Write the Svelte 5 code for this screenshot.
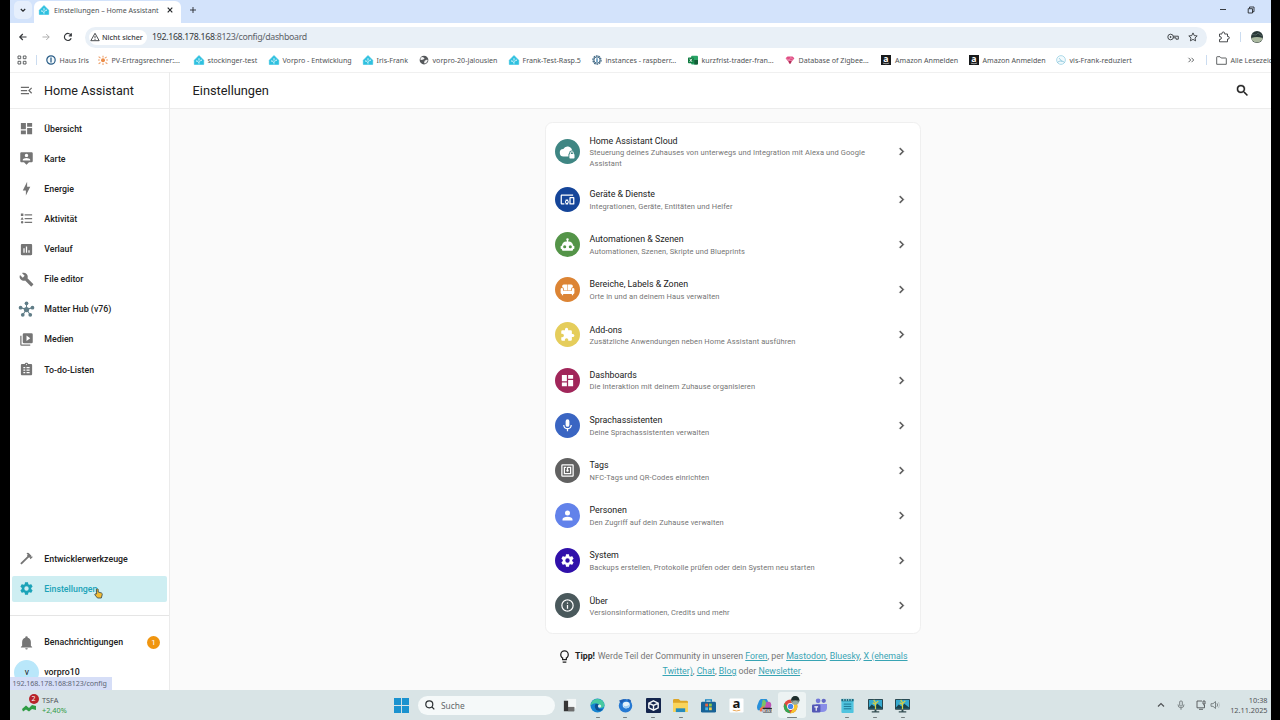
<script>
  const icons = {
    menu: 'M21,15.61L19.59,17L14.58,12L19.59,7L21,8.39L17.44,12L21,15.61M3,6H16V8H3V6M3,13V11H13V13H3M3,18V16H16V18H3Z',
    search: 'M9.5,3A6.5,6.5 0 0,1 16,9.5C16,11.11 15.41,12.59 14.44,13.73L14.71,14H15.5L20.5,19L19,20.5L14,15.5V14.71L13.73,14.44C12.59,15.41 11.11,16 9.5,16A6.5,6.5 0 0,1 3,9.5A6.5,6.5 0 0,1 9.5,3M9.5,5C7,5 5,7 5,9.5C5,12 7,14 9.5,14C12,14 14,12 14,9.5C14,7 12,5 9.5,5Z',
    dashboard: 'M13,3V9H21V3M13,21H21V11H13M3,21H11V15H3M3,13H11V3H3V13Z',
    map: 'M20 2H4C2.89 2 2 2.89 2 4V16C2 17.11 2.9 18 4 18H8L12 22L16 18H20C21.11 18 22 17.11 22 16V4C22 2.89 21.1 2 20 2M12 4.3C13.5 4.3 14.7 5.5 14.7 7S13.5 9.7 12 9.7 9.3 8.5 9.3 7 10.5 4.3 12 4.3M18 15H6V14.1C6 12.1 10 11 12 11S18 12.1 18 14.1V15Z',
    bolt: 'M11 15H6L13 1V9H18L11 23V15Z',
    list: 'M5,9.5L7.5,14H2.5L5,9.5M3,4H7V8H3V4M5,20A2,2 0 0,0 7,18A2,2 0 0,0 5,16A2,2 0 0,0 3,18A2,2 0 0,0 5,20M9,5V7H21V5H9M9,19H21V17H9V19M9,11V13H21V11H9Z',
    chart: 'M19 3H5C3.89 3 3 3.89 3 5V19C3 20.1 3.9 21 5 21H19C20.1 21 21 20.1 21 19V5C21 3.89 20.1 3 19 3M9 17H7V10H9V17M13 17H11V7H13V17M17 17H15V13H17V17Z',
    wrench: 'M22.7,19L13.6,9.9C14.5,7.6 14,4.9 12.1,3C10.1,1 7.1,0.6 4.7,1.7L9,6L6,9L1.6,4.7C0.4,7.1 0.9,10.1 2.9,12.1C4.8,14 7.5,14.5 9.8,13.6L18.9,22.7C19.3,23.1 19.9,23.1 20.3,22.7L22.6,20.4C23.1,20 23.1,19.3 22.7,19Z',
    media: 'M4,6H2V20A2,2 0 0,0 4,22H18V20H4V6M20,2H8A2,2 0 0,0 6,4V16A2,2 0 0,0 8,18H20A2,2 0 0,0 22,16V4A2,2 0 0,0 20,2M12,14.5V5.5L18,10L12,14.5Z',
    todo: 'M19 3H14.82C14.4 1.84 13.3 1 12 1S9.6 1.84 9.18 3H5C3.9 3 3 3.9 3 5V19C3 20.1 3.9 21 5 21H19C20.1 21 21 20.1 21 19V5C21 3.9 20.1 3 19 3M12 3A1 1 0 1 1 12 5A1 1 0 1 1 12 3M7 8H10V10H7V8M12 8H17V10H12V8M7 12H10V14H7V12M12 12H17V14H12V12M7 16H10V18H7V16M12 16H17V18H12V16Z',
    hammer: 'M2,19.63L13.43,8.2L12.72,7.5L14.14,6.07L12,3.89C13.2,2.7 15.09,2.7 16.27,3.89L19.87,7.5L18.45,8.91H21.29L22,9.62L18.45,13.21L17.74,12.5V9.62L16.27,11.04L15.56,10.33L4.13,21.76L2,19.63Z',
    cog: 'M12,15.5A3.5,3.5 0 0,1 8.5,12A3.5,3.5 0 0,1 12,8.5A3.5,3.5 0 0,1 15.5,12A3.5,3.5 0 0,1 12,15.5M19.43,12.97C19.47,12.65 19.5,12.33 19.5,12C19.5,11.67 19.47,11.34 19.43,11L21.54,9.37C21.73,9.22 21.78,8.95 21.66,8.73L19.66,5.27C19.54,5.05 19.27,4.96 19.05,5.05L16.56,6.05C16.04,5.66 15.5,5.32 14.87,5.07L14.5,2.42C14.46,2.18 14.25,2 14,2H10C9.75,2 9.54,2.18 9.5,2.42L9.13,5.07C8.5,5.32 7.96,5.66 7.44,6.05L4.95,5.05C4.73,4.96 4.46,5.05 4.34,5.27L2.34,8.73C2.21,8.95 2.27,9.22 2.46,9.37L4.57,11C4.53,11.34 4.5,11.67 4.5,12C4.5,12.33 4.53,12.65 4.57,12.97L2.46,14.63C2.27,14.78 2.21,15.05 2.34,15.27L4.34,18.73C4.46,18.95 4.73,19.03 4.95,18.95L7.44,17.94C7.96,18.34 8.5,18.68 9.13,18.93L9.5,21.58C9.54,21.82 9.75,22 10,22H14C14.25,22 14.46,21.82 14.5,21.58L14.87,18.93C15.5,18.67 16.04,18.34 16.56,17.94L19.05,18.95C19.27,19.03 19.54,18.95 19.66,18.73L21.66,15.27C21.78,15.05 21.73,14.78 21.54,14.63L19.43,12.97Z',
    bell: 'M21,19V20H3V19L5,17V11C5,7.9 7.03,5.17 10,4.29C10,4.19 10,4.1 10,4A2,2 0 0,1 12,2A2,2 0 0,1 14,4C14,4.1 14,4.19 14,4.29C16.97,5.17 19,7.9 19,11V17L21,19M14,21A2,2 0 0,1 12,23A2,2 0 0,1 10,21',
    cloud: 'M19.3 10A7.5 7.5 0 0 0 5.3 8A6 6 0 0 0 6 20H13.5V16.5Q13.5 15.3 14.7 15V14.5A4.2 4.2 0 0 1 22.5 12.5A5 5 0 0 0 19.3 10M22 16V14.5A2.9 2.9 0 0 0 16.2 14.5V16Q15 16 15 17.2V21.8Q15 23 16.2 23H22Q23.2 23 23.2 21.8V17.2Q23.2 16 22 16M17.6 16V14.5A1.5 1.5 0 0 1 20.6 14.5V16H17.6Z',
    devices: 'M3 6H21V4H3C1.9 4 1 4.9 1 6V18C1 19.1 1.9 20 3 20H7V18H3V6M13 12H9V13.78C8.39 14.33 8 15.11 8 16C8 16.89 8.39 17.67 9 18.22V20H13V18.22C13.61 17.67 14 16.88 14 16S13.61 14.33 13 13.78V12M11 17.5C10.17 17.5 9.5 16.83 9.5 16S10.17 14.5 11 14.5 12.5 15.17 12.5 16 11.83 17.5 11 17.5M22 8H16C15.5 8 15 8.5 15 9V19C15 19.5 15.5 20 16 20H22C22.5 20 23 19.5 23 19V9C23 8.5 22.5 8 22 8M21 18H17V10H21V18Z',
    robot: 'M12,2A2,2 0 0,1 14,4C14,4.74 13.6,5.39 13,5.73V7H14A7,7 0 0,1 21,14H22A1,1 0 0,1 23,15V18A1,1 0 0,1 22,19H21V20A2,2 0 0,1 19,22H5A2,2 0 0,1 3,20V19H2A1,1 0 0,1 1,18V15A1,1 0 0,1 2,14H3A7,7 0 0,1 10,7H11V5.73C10.4,5.39 10,4.74 10,4A2,2 0 0,1 12,2M7.5,13A2.5,2.5 0 0,0 5,15.5A2.5,2.5 0 0,0 7.5,18A2.5,2.5 0 0,0 10,15.5A2.5,2.5 0 0,0 7.5,13M16.5,13A2.5,2.5 0 0,0 14,15.5A2.5,2.5 0 0,0 16.5,18A2.5,2.5 0 0,0 19,15.5A2.5,2.5 0 0,0 16.5,13Z',
    sofa: 'M11.6 4V13H6.2V11.5A3.2 3.2 0 0 0 3.5 8.5V6.5Q3.5 4 6 4ZM12.4 4H18Q20.5 4 20.5 6.5V8.5A3.2 3.2 0 0 0 17.8 11.5V13H12.4ZM3 9.5A2 2 0 0 1 5 11.5V14H19V11.5A2 2 0 0 1 23 11.5V17Q23 19 21 19V21H19V19H5V21H3V19Q1 19 1 17V11.5A2 2 0 0 1 3 9.5Z',
    puzzle: 'M20.5,11H19V7C19,5.89 18.1,5 17,5H13V3.5A2.5,2.5 0 0,0 10.5,1A2.5,2.5 0 0,0 8,3.5V5H4A2,2 0 0,0 2,7V10.8H3.5C5,10.8 6.2,12 6.2,13.5C6.2,15 5,16.2 3.5,16.2H2V20A2,2 0 0,0 4,22H7.8V20.5C7.8,19 9,17.8 10.5,17.8C12,17.8 13.2,19 13.2,20.5V22H17A2,2 0 0,0 19,20V16H20.5A2.5,2.5 0 0,0 23,13.5A2.5,2.5 0 0,0 20.5,11Z',
    mic: 'M12,2A3,3 0 0,1 15,5V11A3,3 0 0,1 12,14A3,3 0 0,1 9,11V5A3,3 0 0,1 12,2M19,11C19,14.53 16.39,17.44 13,17.93V21H11V17.93C7.61,17.44 5,14.53 5,11H7A5,5 0 0,0 12,16A5,5 0 0,0 17,11H19Z',
    nfc: 'M18,6H13A2,2 0 0,0 11,8V10.28C10.41,10.62 10,11.26 10,12A2,2 0 0,0 12,14C13.11,14 14,13.1 14,12C14,11.26 13.6,10.62 13,10.28V8H16V16H8V8H10V6H8L6,6V18H18M20,20H4V4H20M20,2H4A2,2 0 0,0 2,4V20A2,2 0 0,0 4,22H20C21.11,22 22,21.1 22,20V4C22,2.89 21.11,2 20,2Z',
    account: 'M12,4A4,4 0 0,1 16,8A4,4 0 0,1 12,12A4,4 0 0,1 8,8A4,4 0 0,1 12,4M12,14C16.42,14 20,15.79 20,18V20H4V18C4,15.79 7.58,14 12,14Z',
    info: 'M11,9H13V7H11M12,20C7.59,20 4,16.41 4,12C4,7.59 7.59,4 12,4C16.41,4 20,7.59 20,12C20,16.41 16.41,20 12,20M12,2A10,10 0 0,0 2,12A10,10 0 0,0 12,22A10,10 0 0,0 22,12A10,10 0 0,0 12,2M11,17H13V11H11V17Z',
    chevron: 'M8.59,16.58L13.17,12L8.59,7.41L10,6L16,12L10,18L8.59,16.58Z',
    bulb: 'M12,2A7,7 0 0,1 19,9C19,11.38 17.81,13.47 16,14.74V17A1,1 0 0,1 15,18H9A1,1 0 0,1 8,17V14.74C6.19,13.47 5,11.38 5,9A7,7 0 0,1 12,2M9,21V20H15V21A1,1 0 0,1 14,22H10A1,1 0 0,1 9,21M12,4A5,5 0 0,0 7,9C7,11.05 8.23,12.81 10,13.58V16H14V13.58C15.77,12.81 17,11.05 17,9A5,5 0 0,0 12,4Z',
  };

  const bookmarks = [
    { icon: 'power', label: 'Haus Iris' },
    { icon: 'sun', label: 'PV-Ertragsrechner:...' },
    { icon: 'ha', label: 'stockinger-test' },
    { icon: 'ha', label: 'Vorpro - Entwicklung' },
    { icon: 'ha', label: 'Iris-Frank' },
    { icon: 'globe', label: 'vorpro-20-Jalousien' },
    { icon: 'ha', label: 'Frank-Test-Rasp.5' },
    { icon: 'iobroker', label: 'instances - raspberr...' },
    { icon: 'excel', label: 'kurzfrist-trader-fran...' },
    { icon: 'zigbee', label: 'Database of Zigbee...' },
    { icon: 'amazon', label: 'Amazon Anmelden' },
    { icon: 'amazon', label: 'Amazon Anmelden' },
    { icon: 'vis', label: 'vis-Frank-reduziert' },
  ];

  const navItems = [
    { icon: 'dashboard', label: 'Übersicht' },
    { icon: 'map', label: 'Karte' },
    { icon: 'bolt', label: 'Energie' },
    { icon: 'list', label: 'Aktivität' },
    { icon: 'chart', label: 'Verlauf' },
    { icon: 'wrench', label: 'File editor' },
    { icon: 'hub', label: 'Matter Hub (v76)' },
    { icon: 'media', label: 'Medien' },
    { icon: 'todo', label: 'To-do-Listen' },
  ];

  const settings = [
    { icon: 'cloud', color: '#3f8683', title: 'Home Assistant Cloud', text: 'Steuerung deines Zuhauses von unterwegs und Integration mit Alexa und Google Assistant' },
    { icon: 'devices', color: '#154599', title: 'Geräte & Dienste', text: 'Integrationen, Geräte, Entitäten und Helfer' },
    { icon: 'robot', color: '#549448', title: 'Automationen & Szenen', text: 'Automationen, Szenen, Skripte und Blueprints' },
    { icon: 'sofa', color: '#dc8434', title: 'Bereiche, Labels & Zonen', text: 'Orte in und an deinem Haus verwalten' },
    { icon: 'puzzle', color: '#e5cd5b', title: 'Add-ons', text: 'Zusätzliche Anwendungen neben Home Assistant ausführen' },
    { icon: 'dashboard', color: '#a1265a', title: 'Dashboards', text: 'Die Interaktion mit deinem Zuhause organisieren' },
    { icon: 'mic', color: '#3a65c2', title: 'Sprachassistenten', text: 'Deine Sprachassistenten verwalten' },
    { icon: 'nfc', color: '#616161', title: 'Tags', text: 'NFC-Tags und QR-Codes einrichten' },
    { icon: 'account', color: '#6282ea', title: 'Personen', text: 'Den Zugriff auf dein Zuhause verwalten' },
    { icon: 'cog', color: '#3010aa', title: 'System', text: 'Backups erstellen, Protokolle prüfen oder dein System neu starten' },
    { icon: 'info', color: '#4a595c', title: 'Über', text: 'Versionsinformationen, Credits und mehr' },
  ];

  const apps = ['taskview', 'edge', 'thunderbird', 'cube', 'explorer', 'store', 'amazon', 'copilot', 'chrome', 'teams', 'notepad', 'remote', 'remote'];
  const running = ['edge', 'thunderbird', 'cube', 'explorer', 'notepad', 'remote'];
</script>

{#snippet mdi(name)}
  <svg class="mdi" viewBox="0 0 24 24">
    {#if name === 'hub'}
      <path d="M12 12V2M12 12 2.500 9M12 12 21.500 9M12 12 6 20.500M12 12 18 20.500" stroke="currentColor" stroke-width="1.700" />
      <circle cx="12" cy="12" r="4.200" /><circle cx="12" cy="2" r="3" /><circle cx="2.500" cy="9" r="3" />
      <circle cx="21.500" cy="9" r="3" /><circle cx="6" cy="20.500" r="3" /><circle cx="18" cy="20.500" r="3" />
    {:else}
      <path fill-rule="evenodd" d={icons[name]} />
    {/if}
  </svg>
{/snippet}

{#snippet favicon(name)}
  <svg class="favicon" viewBox="0 0 16 16">
    {#if name === 'ha'}
      <path d="M8 .8 15.500 8.300V15H.5V8.300Z" fill="#2fc0df" stroke="#2fc0df" stroke-linejoin="round" />
      <path d="M8 15V7M8 12.800 4.800 9.600M8 11.500 11.200 8.500" stroke="#d5f5fb" stroke-width="1" />
      <circle cx="8" cy="6.500" r="1.200" fill="#d5f5fb" /><circle cx="4.500" cy="9.500" r="1.200" fill="#d5f5fb" /><circle cx="11.500" cy="8.500" r="1.200" fill="#d5f5fb" />
    {:else if name === 'power'}
      <circle cx="8" cy="8" r="6.700" fill="#f4fafc" stroke="#285b86" stroke-width="1.900" />
      <path d="M8 4v8" stroke="#285b86" stroke-width="2" />
    {:else if name === 'sun'}
      <circle cx="8" cy="8.500" r="3.200" fill="#ec8d49" />
      <path d="M0 8h3M1 2.500l3 2.500M1 14l3-2M8 1v3M8 13v3M14 3l-3 2M13 8h3M12 12l3 2" stroke="#eda16c" stroke-width="1.800" />
    {:else if name === 'globe'}
      <circle cx="8" cy="8" r="7" fill="#55585b" />
      <path d="M3 4 6 3 9 5 7 7 4 8 2 7M9 9 13 7 14 9 11 13 8 13Z" fill="#f3f3f3" />
    {:else if name === 'iobroker'}
      <circle cx="8" cy="8" r="6.500" fill="none" stroke="#416884" stroke-width="2" stroke-dasharray="2.800 1.200" />
      <circle cx="8" cy="8" r="5" fill="#fff" stroke="#416884" stroke-width="1.600" /><path d="M8 5v6" stroke="#3279aa" stroke-width="2" />
    {:else if name === 'excel'}
      <rect x="5" y="1" width="11" height="14" rx="1.500" fill="#29a366" /><path d="M10 8h6v5.500q0 1.500-1.500 1.500H10Z" fill="#135e36" />
      <rect y="4" width="9" height="9" rx="1" fill="#107c41" /><path d="m2.600 6 3.800 5m0-5-3.800 5" stroke="#fff" stroke-width="1.300" />
    {:else if name === 'zigbee'}
      <path d="M1 5 4 2.500H12L15 5 12 9H4Z" fill="#df4c83" /><path d="M5 9.500H11L9 14H7Z" fill="#b62c59" /><path d="m2 6 5 2 2-4 4 3" stroke="#f3a4bd" fill="none" />
    {:else if name === 'amazon'}
      <rect x="0" y="0" width="16" height="16" fill="#17191a" />
      <text x="8" y="11.300" text-anchor="middle" class="brand-a">a</text>
      <path d="M3 13q5 2 10 0" stroke="#eee" fill="none" />
    {:else}
      <circle cx="8" cy="8" r="7" fill="#f2fafd" stroke="#a9d8e8" stroke-width="1.500" /><path d="m5 5 5 6M2 12q6-5 12 0" stroke="#86c4da" stroke-width="1.300" fill="none" />
    {/if}
  </svg>
{/snippet}

{#snippet appIcon(name)}
  <svg class="app-icon" viewBox="0 0 16 16">
    {#if name === 'taskview'}
      <path d="M5 1H15V11H5Z" fill="#f2f6f6" /><path d="M2 3H6.500V9.500H13V14H2Z" fill="#353535" /><path d="M6.500 9.500H13V14H6.500Z" fill="#6d6d6d" />
    {:else if name === 'edge'}
      <circle cx="8" cy="8" r="7.500" fill="#1684d0" />
      <path d="M1 6A7.500 7.500 0 0 1 15.500 8Q15 11 11 10.500 9 10 10 8 9 5.500 6 5.500 3 5.500.6 8Z" fill="#46c9a1" />
      <path d="M10 8Q8.500 5.500 6 6.500 4 9 6.500 12.500 10 15 14 12 11 13 9 11 8 9.500 10 8" fill="#0d4f91" /><circle cx="10.200" cy="8.600" r="1.800" fill="#e2efef" />
    {:else if name === 'thunderbird'}
      <circle cx="8" cy="8.300" r="7.200" fill="#2579d3" />
      <path d="M1 3Q5 0 9 2 5 3 4 6ZM10 1Q14 1 14 4L11 4Z" fill="#1e5db1" /><ellipse cx="8.800" cy="7.500" rx="3.800" ry="3.400" fill="#e4f2fb" /><path d="M5 6Q7 11 12.500 7 11 12 7 11Z" fill="#9fcdf3" />
    {:else if name === 'cube'}
      <rect width="16" height="16" rx="1" fill="#14254d" />
      <path d="m8 3 5 2.500v5L8 13l-5-2.500v-5ZM3 5.500l5 2.500 5-2.500M8 8v5" fill="none" stroke="#f1f5f8" stroke-width="1.500" />
    {:else if name === 'explorer'}
      <path d="M0 2.500Q0 1 1.500 1H6L8 3H14.500Q16 3 16 4.500V14H0Z" fill="#dda526" /><path d="M0 5H16V14Q16 15 15 15H1Q0 15 0 14Z" fill="#f9d45b" /><path d="M3 11H13V15H3Z" fill="#258bbb" />
    {:else if name === 'store'}
      <path d="M5 4V2H11V4" stroke="#1885c2" stroke-width="1.500" fill="none" /><rect y="4" width="16" height="11.500" rx="1.500" fill="#176297" />
      <path d="M4.500 6H7.500V9H4.500Z" fill="#e9663e" /><path d="M8.500 6H11.500V9H8.500Z" fill="#8dca49" /><path d="M4.500 10H7.500V13H4.500Z" fill="#44b9ec" /><path d="M8.500 10H11.500V13H8.500Z" fill="#f2cb44" />
    {:else if name === 'amazon'}
      <rect x=".5" y=".5" width="15" height="15" rx="1" fill="#fff" /><text x="8" y="11" text-anchor="middle" class="brand-a dark">a</text><path d="M4 13q4 1.500 8 0" stroke="#eca653" fill="none" />
    {:else if name === 'copilot'}
      <path d="M4 1H10Q11 1 12 5L10 8H6L4 13H1Q-1 10 1 6Q2 2 4 1" fill="#2790db" /><path d="M6 2Q9 1 10 6L8 12 4 13Z" fill="#7bc368" /><path d="M10 4H13Q16 5 15 9L12 14H5L8 11Z" fill="#bb55b5" /><path d="M3 11 8 8 7 13Q5 15 3 14Z" fill="#ed774b" />
      <rect x="6" y="10.500" width="10" height="5" rx="1" fill="#26252d" /><text x="11" y="14.500" text-anchor="middle" class="m365">M365</text>
    {:else if name === 'chrome'}
      <circle cx="7" cy="9" r="7.300" fill="#e04a3f" /><path d="M.7 5.500 5 12.500 7 16.300A7.300 7.300 0 0 1 .7 5.500" fill="#34a853" /><path d="M7 5.500H13.300A7.300 7.300 0 0 1 6.500 16.300L10.200 11Z" fill="#f7c72d" />
      <circle cx="7" cy="9" r="3.700" fill="#fff" /><circle cx="7" cy="9" r="2.800" fill="#4386ed" /><circle cx="12" cy="2.500" r="4.600" fill="#97aaa0" /><path d="M7.400 3Q8-2.100 12-2.100T16.600 3Q12 1.500 7.400 3" fill="#1f2e2c" /><path d="M8 4.500Q12 1.500 16 4.500L15 2.500H9Z" fill="#4e5552" />
    {:else if name === 'teams'}
      <circle cx="6.500" cy="3" r="2.500" fill="#7378d8" /><circle cx="12.500" cy="3" r="2.300" fill="#6267c4" /><path d="M4 6.500H16V11Q15.500 15 11 15H8Q4 14 4 10Z" fill="#898ee8" />
      <rect y="7" width="9" height="8.500" rx="1.200" fill="#5257b5" /><path d="M2.500 9.500H6.500M4.500 9.500V13.500" stroke="#fff" stroke-width="1.200" />
    {:else if name === 'notepad'}
      <rect x="1.500" y="1" width="13" height="15" rx="1" fill="#50c4df" /><path d="M1.500 1H14.500V3.500H1.500Z" fill="#17697f" /><path d="M4 6.500H12M4 9H12M4 11.500H12" stroke="#19728f" /><path d="M4 0v3M6.700 0v3M9.300 0v3M12 0v3" stroke="#b3dce3" />
    {:else}
      <rect y="1" width="16" height="11.500" rx=".8" fill="#283f46" /><rect x="1" y="2" width="14" height="9.500" fill="#36a9cf" /><path d="M1 10 4 7 7 9 10 6 15 10V11.500H1Z" fill="#19414c" />
      <path d="M8 12V5M8 7 5 5M8 6 11 3M6 2 8 5" stroke="#d8cf43" stroke-width="1.300" /><path d="M7 12.500H9V14H12V15.500H4V14H7Z" fill="#344d52" />
    {/if}
  </svg>
{/snippet}

<div class="screen">
  <div class="tabs">
    <div class="tab-search">
      <svg class="i8" viewBox="0 0 8 8"><path d="M1.800 3 4 5.200 6.200 3" class="line bold" /></svg>
    </div>
    <div class="tab">
      {@render favicon('ha')}
      <span class="tab-title">Einstellungen – Home Assistant</span>
      <svg class="i8" viewBox="0 0 8 8"><path d="m1.700 1.700 4.600 4.600m0-4.600L1.700 6.300" class="line bold" /></svg>
    </div>
    <svg class="i8 new-tab" viewBox="0 0 8 8"><path d="M4 1v6M1 4h6" class="line" /></svg>
    <div class="window-buttons">
      <svg class="i8" viewBox="0 0 8 8"><path d="M1 3.500h6" class="line" /></svg>
      <svg class="i8" viewBox="0 0 8 8"><path d="M1.200 2.700h4.300v4.300H1.200ZM2.500 2.500V1h4.500v4.700H5.500" class="line" /></svg>
    </div>
  </div>

  <div class="toolbar">
    <div class="nav-buttons">
      <svg class="i10" viewBox="0 0 10 10"><path d="M8.500 5H1.800M4.800 2 1.800 5l3 3" class="line bold" /></svg>
      <svg class="i10 muted" viewBox="0 0 10 10"><path d="M1.500 5h6.700M5.200 2l3 3-3 3" class="line" /></svg>
      <svg class="i10" viewBox="0 0 10 10"><path d="M8.200 6.200A3.500 3.500 0 1 1 8 3.300M8.300 1.300v2.500H5.800" class="line bold" /></svg>
    </div>
    <div class="omnibox">
      <div class="insecure">
        <svg class="i10" viewBox="0 0 10 10"><path d="M5 1.300 9.200 8.700H.8ZM5 4v2.300M5 7v.9" class="line" /></svg>
        <span>Nicht sicher</span>
      </div>
      <span class="url">192.168.178.168<i>:8123/config/dashboard</i></span>
      <svg class="key" viewBox="0 0 12 8"><circle cx="3.600" cy="4" r="2.800" class="line" /><circle cx="3.600" cy="4" r=".8" /><path d="M6.300 3.200h5v3H9V4.800H6.300" class="line" /></svg>
      <svg class="i10" viewBox="0 0 10 10"><path d="m5 .9 1.250 2.700 2.950.35-2.200 2 .6 2.900L5 7.400 2.400 8.850 3 5.950.8 3.950l2.950-.35Z" class="line" /></svg>
    </div>
    <svg class="ext" viewBox="0 0 12 12"><path d="M1.500 3H4V2.300a1.300 1.300 0 0 1 2.600 0V3H9.500V5.500H10a1.300 1.300 0 0 1 0 2.600h-.5V10.800H1.500V8.400H2a1.400 1.400 0 0 0 0-2.800h-.5Z" class="line" /></svg>
    <span class="sep"></span>
    <svg class="avatar" viewBox="0 0 12 12"><circle cx="6" cy="6" r="6" fill="#293736" /><path d="M.2 7Q6 5 11.800 7A6 6 0 0 1 .2 7" fill="#aab89f" /><path d="M1 3.500 5 4 7 2 11 5" stroke="#5e7070" stroke-width=".7" fill="none" /></svg>
  </div>

  <div class="bookmarks">
    <svg class="i10 apps-grid" viewBox="0 0 10 10"><path d="M1 1h2.700v2.700H1ZM6.300 1H9v2.700H6.300ZM1 6.300h2.700V9H1ZM6.300 6.300H9V9H6.300Z" class="line" /></svg>
    <span class="sep"></span>
    <div class="bookmark-list">
      {#each bookmarks as b}
        <div class="bookmark">{@render favicon(b.icon)}<span>{b.label}</span></div>
      {/each}
    </div>
    <svg class="i8 more" viewBox="0 0 8 8"><path d="m1.500 1.800 2.200 2.200-2.200 2.200M4.500 1.800 6.700 4 4.500 6.200" class="line" /></svg>
    <span class="sep"></span>
    <svg class="folder" viewBox="0 0 11 9"><path d="M.7 1.200Q.7.700 1.200.7H4L5.200 2H9.800Q10.300 2 10.300 2.500V8.300H.7Z" class="line" /></svg>
    <span class="all">Alle Lesezeichen</span>
  </div>

  <div class="page">
    <aside>
      <div class="brand">{@render mdi('menu')}<span>Home Assistant</span></div>
      <nav>
        {#each navItems as item}
          <div class="nav-item" class:hub={item.icon === 'hub'}>{@render mdi(item.icon)}<span>{item.label}</span></div>
        {/each}
      </nav>
      <div class="nav-bottom">
        <div class="nav-item">{@render mdi('hammer')}<span>Entwicklerwerkzeuge</span></div>
        <div class="nav-item active">
          {@render mdi('cog')}<span>Einstellungen</span>
          <svg class="pointer" viewBox="0 0 9 11"><path d="M2.600 6V1.300Q3.400.4 4.200 1.300V4L7.500 5Q8.500 5.300 8.200 6.800L7.300 10H3.500L.8 6.800Q.8 5.700 1.700 5.800Z" fill="#f3bd34" stroke="#32434a" stroke-width=".8" /></svg>
        </div>
      </div>
      <div class="nav-user">
        <div class="nav-item">{@render mdi('bell')}<span>Benachrichtigungen</span><b class="count">1</b></div>
        <div class="nav-item user"><span class="initial">v</span><span>vorpro10</span></div>
      </div>
      <div class="status">192.168.178.168:8123/config</div>
    </aside>

    <main>
      <header><h1>Einstellungen</h1>{@render mdi('search')}</header>
      <div class="card">
        {#each settings as s}
          <div class="row">
            <div class="round" style:background={s.color}>{@render mdi(s.icon)}</div>
            <div class="row-text"><h2>{s.title}</h2><p>{s.text}</p></div>
            {@render mdi('chevron')}
          </div>
        {/each}
      </div>
      <div class="tip">
        {@render mdi('bulb')}<b>Tipp!</b> <span>Werde Teil der Community in unseren <u>Foren</u>, per <u>Mastodon</u>, <u>Bluesky</u>, <u>X (ehemals</u></span><br />
        <span><u>Twitter)</u>, <u>Chat</u>, <u>Blog</u> oder <u>Newsletter</u>.</span>
      </div>
    </main>
  </div>

  <footer>
    <div class="widget">
      <div class="stock">
        <svg viewBox="0 0 15 10"><path d="M0 7 4 3.500 7 6 10 3 14 4V8L10 7 7 9.500 4 7.500 1 9.500Z" fill="#2e9c43" /></svg>
        <b>2</b>
      </div>
      <div class="quote"><span>TSFA</span><span class="up">+2,40%</span></div>
    </div>
    <svg class="start" viewBox="0 0 16 16"><path d="M0 0H7.500V7.500H0ZM8.500 0H16V7.500H8.500ZM0 8.500H7.500V16H0ZM8.500 8.500H16V16H8.500Z" fill="#1b92cf" /></svg>
    <div class="search-pill">
      <svg class="i10" viewBox="0 0 10 10"><path d="M7 7 9.300 9.300M7.800 4.300a3.500 3.500 0 1 1-7 0 3.500 3.500 0 0 1 7 0Z" class="line bold" /></svg>
      <span>Suche</span>
    </div>
    <div class="apps">
      {#each apps as app}
        <div class="app" class:focused={app === 'chrome'} class:running={running.includes(app)}>{@render appIcon(app)}</div>
      {/each}
    </div>
    <div class="tray">
      <svg class="i8" viewBox="0 0 8 8"><path d="M1 5.500 4 2.500l3 3" class="line bold" /></svg>
      <svg class="i10 dim" viewBox="0 0 10 10"><path d="M3.700 1.500q1.300-1.300 2.600 0v4q-1.300 1.300-2.600 0ZM2 4.500q0 3.300 3 3.300t3-3.300M5 8v1.800" class="line" /></svg>
      <svg class="i10 net" viewBox="0 0 10 10"><path d="M6 1H1v6.800h7.500V5M3 9.300h4M7 1h2v3H7ZM8 4v1.500" class="line" /></svg>
      <svg class="i10 dim" viewBox="0 0 10 10"><path d="M1 3.700h2L5.500 1.500v7L3 6.300H1ZM7 3.300q1.200 1.700 0 3.400" class="line" /><path d="M8.500 2q2 3 0 6" class="line faint" /></svg>
      <div class="clock"><span>10:38</span><span>12.11.2025</span></div>
    </div>
  </footer>
</div>

<style>
  :global(body) {
    background: #000;
    overflow: hidden;
  }

  .screen {
    display: flex;
    flex-direction: column;
    width: 1261.5px;
    height: 720px;
    margin-left: 9.5px;
    overflow: hidden;
    background: #fff;
    font-family: 'Noto Sans', 'Open Sans', sans-serif;
    font-size: 7.3px;
    color: #505356;
    white-space: nowrap;
  }

  svg {
    display: block;
    flex: none;
    overflow: visible;
  }
  .line {
    fill: none;
    stroke: currentColor;
    stroke-width: 0.9;
  }
  .bold { stroke-width: 1.2; }
  .faint { opacity: 0.35; }
  .i8 { width: 8px; height: 8px; }
  .i10 { width: 10px; height: 10px; }
  .favicon { width: 10px; height: 10px; }
  .mdi {
    width: 15px;
    height: 15px;
    fill: currentColor;
  }
  .brand-a {
    font: bold 14px 'Open Sans', sans-serif;
    fill: #fff;
  }
  .dark { fill: #161616; }
  .m365 {
    font: bold 4px 'Open Sans', sans-serif;
    fill: #fff;
  }
  .sep {
    width: 1px;
    height: 10px;
    background: #cbdcf0;
  }

  /* browser */
  .tabs {
    display: flex;
    align-items: center;
    height: 23px;
    flex: none;
    background: #d3e3fb;
    color: #26292c;
  }
  .tab-search {
    display: grid;
    place-items: center;
    width: 18px;
    height: 18px;
    margin: 0 2px 3px 4px;
    border-radius: 5px;
    background: #e6effc;
  }
  .tab {
    display: flex;
    align-items: center;
    align-self: flex-end;
    width: 147px;
    height: 22px;
    box-sizing: border-box;
    margin-left: 0.5px;
    padding: 0 7px 4px 5px;
    border-radius: 6px 6px 0 0;
    background: #fff;
  }
  .tab-title {
    flex: 1;
    margin-left: 5px;
    color: #4c5054;
    font-size: 7.1px;
  }
  .new-tab { margin: 0 0 3px 8px; }
  .window-buttons {
    display: flex;
    gap: 20px;
    margin: 0 16px 3px auto;
  }
  .toolbar {
    display: flex;
    align-items: center;
    flex: none;
    height: 28px;
    color: #36393c;
  }
  .nav-buttons {
    display: flex;
    gap: 12.5px;
    margin-left: 8.5px;
  }
  .muted { color: #a6a6a6; }
  .omnibox {
    display: flex;
    align-items: center;
    width: 1122px;
    height: 21px;
    box-sizing: border-box;
    margin-left: 11.5px;
    padding: 0 9px 0 4px;
    border-radius: 11px;
    background: #e9f0f7;
  }
  .insecure {
    display: flex;
    align-items: center;
    gap: 2.5px;
    width: 58.5px;
    height: 15px;
    box-sizing: border-box;
    padding-left: 1px;
    border-radius: 8px;
    background: #fff;
    font-size: 7.2px;
    font-weight: 500;
  }
  .url {
    margin: 0 auto 0 5px;
    font-size: 8.8px;
    letter-spacing: -0.32px;
  }
  .url i {
    font-style: normal;
    color: #5d6267;
  }
  .key {
    width: 12px;
    height: 8px;
    margin-right: 9px;
  }
  .ext {
    width: 12px;
    height: 12px;
    margin: 0 10px 0 11.500px;
  }
  .avatar {
    width: 12px;
    height: 12px;
    margin-left: 10px;
  }
  .bookmarks {
    display: flex;
    align-items: center;
    flex: none;
    height: 21px;
    padding-bottom: 3px;
    box-sizing: border-box;
    font-size: 7.1px;
  }
  .apps-grid { margin: 0 9px 0 7px; }
  .bookmark-list {
    display: grid;
    flex: none;
    grid-template-columns: 52px 96px 75px 94px 56px 90px 83px 96px 97px 96.5px 87.5px 87px 90px;
    width: 1141px;
    margin-left: 9px;
  }
  .bookmark {
    display: flex;
    align-items: center;
    gap: 4px;
  }
  .more { margin-right: 11px; }
  .folder {
    width: 11px;
    height: 9px;
    margin: 0 4px 0 9px;
  }
  .all {
    flex: none;
  }
  .bookmarks .sep { flex: none; }

  /* home assistant */
  .page {
    display: flex;
    flex: none;
    height: 618px;
    font-family: Roboto, sans-serif;
    color: #212121;
  }
  aside {
    position: relative;
    display: flex;
    flex-direction: column;
    width: 160.5px;
    box-sizing: border-box;
    border-right: 1px solid #ebebeb;
  }
  .brand {
    display: flex;
    align-items: center;
    gap: 10px;
    height: 36.5px;
    box-sizing: border-box;
    padding-left: 9.5px;
    border-top: 1px solid #f0f0f0;
    border-bottom: 1px solid #ececec;
    font-size: 12.6px;
  }
  .brand .mdi { color: #6b6b6b; }
  nav { padding-top: 5px; }
  .nav-item {
    display: flex;
    align-items: center;
    gap: 10px;
    height: 30.14px;
    padding-left: 9.8px;
    font-size: 8.8px;
    font-weight: 500;
  }
  .nav-item .mdi {
    width: 15px;
    color: #757575;
  }
  .nav-item.hub .mdi { color: #607d87; }
  .nav-bottom {
    margin-top: auto;
    padding-bottom: 13px;
    border-bottom: 1px solid #e5e5e5;
  }
  .nav-item.active {
    height: 25.5px;
    margin: 2px 2px 0.5px 2.5px;
    padding-left: 7.3px;
    border-radius: 2px;
    background: #ceeef2;
    color: #1ba3b8;
  }
  .nav-item.active .mdi { color: #1ba3b8; }
  .pointer {
    width: 9px;
    height: 11px;
    margin: 9px 0 0 -13px;
  }
  .nav-user {
    height: 74px;
    box-sizing: border-box;
    padding-top: 11px;
  }
  .count {
    display: grid;
    place-items: center;
    width: 13px;
    height: 13px;
    margin: 0 9px 0 auto;
    border-radius: 50%;
    background: #f0950f;
    color: #fff;
    font-size: 8px;
    font-weight: 400;
  }
  .user {
    gap: 5px;
    padding-left: 4.8px;
  }
  .initial {
    display: grid;
    place-items: center;
    width: 25px;
    height: 25px;
    border-radius: 50%;
    background: #b9e7fa;
    font-weight: 400;
  }
  .status {
    position: absolute;
    left: 0;
    bottom: 0;
    width: 102px;
    height: 13px;
    box-sizing: border-box;
    padding-left: 3px;
    background: #d6def7;
    color: #5d6675;
    font: 7.1px/13px 'Noto Sans', sans-serif;
    letter-spacing: -0.06px;
  }
  main {
    flex: 1;
    background: #fafafa;
  }
  header {
    display: flex;
    align-items: center;
    justify-content: space-between;
    height: 36.5px;
    box-sizing: border-box;
    padding: 0 21.5px 0 22.5px;
    border-top: 1px solid #f0f0f0;
    border-bottom: 1px solid #ececec;
    background: #fff;
  }
  h1, h2, p {
    margin: 0;
    font-weight: 400;
  }
  h1 { font-size: 12.8px; }
  header .mdi,
  .row > .mdi {
    stroke: currentColor;
    stroke-width: 0.5;
  }
  .card {
    width: 376px;
    height: 512px;
    box-sizing: border-box;
    margin: 13.5px 0 0 374.5px;
    padding: 3.7px 9.3px 0;
    border: 1px solid #efefef;
    border-radius: 7.5px;
    background: #fff;
  }
  .row {
    display: flex;
    align-items: center;
    height: 45.2px;
  }
  .row:first-child { height: 50px; }
  .round {
    display: grid;
    place-items: center;
    width: 25px;
    height: 25px;
    flex: none;
    border-radius: 50%;
    color: #fff;
  }
  .row-text {
    width: 290px;
    margin: 0 15px 0 9.700px;
    padding-top: 1px;
    white-space: normal;
  }
  h2 {
    font-size: 8.85px;
    line-height: 12.6px;
  }
  p {
    color: #757575;
    font-size: 7.5px;
    line-height: 11px;
    letter-spacing: 0.095px;
  }
  .row > .mdi { color: #555; }
  .tip {
    width: 376px;
    margin: 15px 0 0 374.5px;
    color: #757575;
    font-size: 8.8px;
    line-height: 15px;
    text-align: center;
  }
  .tip .mdi {
    display: inline-block;
    margin-right: 2.5px;
    vertical-align: middle;
    color: #212121;
  }
  .tip b {
    margin-right: 0.5px;
    color: #212121;
    font-weight: 700;
  }
  u { color: #38a4b4; }

  /* taskbar */
  footer {
    display: flex;
    align-items: center;
    flex: none;
    height: 30px;
    background: #d9e4e6;
  }
  .widget {
    display: flex;
    gap: 3px;
    width: 384.5px;
    padding-left: 12.5px;
    box-sizing: border-box;
  }
  .stock {
    position: relative;
    width: 17px;
  }
  .stock svg {
    width: 15px;
    height: 10px;
    margin-top: 7px;
  }
  .stock b {
    position: absolute;
    top: -1px;
    left: 6.5px;
    width: 10px;
    border-radius: 50%;
    background: #b82329;
    color: #fff;
    font-size: 7px;
    font-weight: 400;
    line-height: 10px;
    text-align: center;
  }
  .quote {
    display: flex;
    flex-direction: column;
    line-height: 10px;
  }
  .up { color: #2f9a45; }
  .start {
    width: 15px;
    height: 15px;
  }
  .search-pill {
    display: flex;
    align-items: center;
    gap: 6px;
    width: 137px;
    height: 19px;
    box-sizing: border-box;
    margin-left: 9px;
    padding-left: 7px;
    border-radius: 10px;
    background: #f5f9f9;
    font-size: 8.4px;
    color: #63686a;
  }
  .search-pill svg { color: #2b3033; }
  .apps {
    display: flex;
    margin-left: 0.9px;
  }
  .app {
    display: grid;
    place-items: center;
    position: relative;
    width: 27.75px;
    height: 26px;
  }
  .app-icon {
    width: 15px;
    height: 15px;
  }
  .focused {
    background: #edf3f3;
    border-radius: 3px;
  }
  .running::after,
  .focused::after {
    content: '';
    position: absolute;
    bottom: 0;
    width: 4px;
    height: 1.5px;
    border-radius: 1px;
    background: #777f81;
  }
  .focused::after { width: 10px; }
  .tray {
    display: flex;
    align-items: center;
    margin-left: auto;
    padding-right: 3.5px;
  }
  .tray .dim { color: #70787a; }
  .tray .i8 { margin-right: 11px; }
  .tray .net {
    margin: 0 4px 0 10px;
  }
  .tray > .i8:first-child { margin-left: -4px; }
  .clock {
    display: flex;
    flex-direction: column;
    width: 48px;
    line-height: 10px;
    text-align: right;
  }
</style>
